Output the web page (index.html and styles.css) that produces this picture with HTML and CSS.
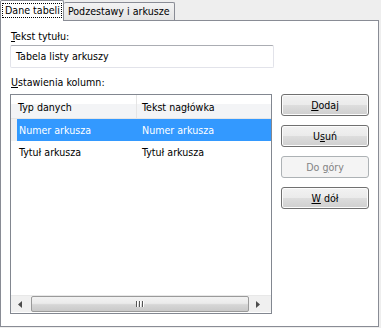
FILE: index.html
```html
<!DOCTYPE html>
<html lang="pl">
<head>
<meta charset="utf-8">
<title>Dane tabeli</title>
<link rel="stylesheet" href="styles.css">
</head>
<body>
<div class="dialog">
  <div class="tabs">
    <div class="tab active"><span class="focus">Dane tabeli</span></div>
    <div class="tab">Podzestawy i arkusze</div>
  </div>
  <div class="panel">
    <div class="label"><u>T</u>ekst tytułu:</div>
    <div class="input">Tabela listy arkuszy</div>
    <div class="label second"><u>U</u>stawienia kolumn:</div>
    <div class="main">
      <div class="list">
        <div class="header">
          <div class="col c1">Typ danych</div>
          <div class="col c2">Tekst nagłówka</div>
        </div>
        <div class="rows">
          <div class="row selected">
            <div class="cell c1">Numer arkusza</div>
            <div class="cell c2">Numer arkusza</div>
          </div>
          <div class="row">
            <div class="cell c1">Tytuł arkusza</div>
            <div class="cell c2">Tytuł arkusza</div>
          </div>
        </div>
        <div class="hscroll">
          <div class="arrow left"><svg width="4" height="7" viewBox="0 0 4 7"><path d="M4 0 L0 3.5 L4 7 Z" fill="#4d4d4d"/></svg></div>
          <div class="thumb"><span class="grip"></span><span class="grip"></span><span class="grip"></span></div>
          <div class="track"></div>
          <div class="arrow right"><svg width="4" height="7" viewBox="0 0 4 7"><path d="M0 0 L4 3.5 L0 7 Z" fill="#4d4d4d"/></svg></div>
        </div>
      </div>
      <div class="buttons">
        <div class="btn"><u>D</u>odaj</div>
        <div class="btn">U<u>s</u>uń</div>
        <div class="btn disabled">Do <u>g</u>óry</div>
        <div class="btn"><u>W</u> dół</div>
      </div>
    </div>
  </div>
</div>
</body>
</html>
```
FILE: styles.css
```css
html, body {
  margin: 0;
  padding: 0;
  background: #eeeeee;
}
body {
  font-family: "DejaVu Sans Condensed", "Liberation Sans", sans-serif;
  font-size: 10.6px;
  color: #000;
  width: 381px;
  height: 328px;
  overflow: hidden;
}
u { text-decoration: underline; text-underline-offset: 1px; }
.tabs {
  display: flex;
  height: 20px;
  align-items: flex-end;
  position: relative;
  z-index: 2;
}
.tab {
  flex-shrink: 0;
  white-space: nowrap;
  height: 18px;
  box-sizing: border-box;
  border: 1px solid #898c95;
  border-bottom: none;
  background: linear-gradient(#f3f3f3, #e4e4e4);
  padding: 1px 4px 0 4px;
  line-height: 15px;
  border-radius: 2px 2px 0 0;
}
.tab:not(.active) {
  border-left: none;
}
.tab.active {
  height: 21px;
  margin-bottom: -1px;
  background: #fff;
  padding: 2px 1px 0 1px;
}
.focus {
  display: inline-block;
  border: 1px dotted #000;
  padding: 0 1px 0 2px;
  line-height: 13px;
}
.panel {
  width: 379px;
  height: 307px;
  box-sizing: border-box;
  border: 1px solid #898c95;
  background: #fff;
  padding: 8px 9px 0 9px;
}
.label {
  height: 14px;
  line-height: 14px;
  padding-left: 1px;
  margin-bottom: 2px;
}
.label.second {
  margin-top: 7px;
  margin-bottom: 5px;
}
.input {
  width: 264px;
  height: 23px;
  box-sizing: border-box;
  border: 1px solid #e2e3ea;
  border-top-color: #abadb3;
  border-radius: 2px;
  padding: 0 5px;
  line-height: 21px;
}
.main {
  display: flex;
  gap: 9px;
}
.list {
  width: 264px;
  height: 220px;
  box-sizing: border-box;
  border: 1px solid #828790;
  display: flex;
  flex-direction: column;
}
.header {
  display: flex;
  height: 24px;
  background: linear-gradient(#ffffff 0%, #ffffff 40%, #f3f4f6 41%, #f3f4f6 100%);
  border-bottom: 1px solid #e5e5e5;
  box-sizing: border-box;
}
.col {
  line-height: 24px;
  box-sizing: border-box;
}
.col.c1 {
  width: 126px;
  padding-left: 7px;
  border-right: 1px solid #e5e5e5;
}
.col.c2 {
  padding-left: 5px;
}
.rows {
  flex: 1;
}
.row {
  display: flex;
  height: 22px;
  line-height: 22px;
  margin-left: 6px;
}
.row.selected {
  background: #3399ff;
  color: #fff;
  box-shadow: -6px 0 0 #f0f0f0;
}
.cell.c1 {
  width: 120px;
  padding-left: 2px;
  box-sizing: border-box;
}
.cell.c2 {
  padding-left: 5px;
}
.hscroll {
  display: flex;
  height: 17px;
  background: #f0f0f0;
  border-top: 1px solid #e8e8e8;
  box-sizing: border-box;
  margin-bottom: 1px;
}
.arrow {
  width: 20px;
  display: flex;
  align-items: center;
  box-sizing: border-box;
}
.arrow.left { padding-left: 7px; }
.arrow.right { padding-left: 5px; }
.thumb {
  width: 218px;
  box-sizing: border-box;
  border: 1px solid #9a9a9a;
  border-radius: 2px;
  background: linear-gradient(#f2f2f2 0%, #ebebeb 45%, #d6d6d6 55%, #c9c9c9 100%);
  display: flex;
  justify-content: center;
  align-items: center;
  gap: 1px;
}
.grip {
  width: 1px;
  height: 6px;
  background: #555;
  box-shadow: 1px 0 0 #fff;
  margin-right: 1px;
}
.track {
  width: 2px;
}
.buttons {
  display: flex;
  flex-direction: column;
  gap: 9px;
}
.btn {
  width: 88px;
  height: 22px;
  box-sizing: border-box;
  border: 1px solid #707070;
  border-radius: 3px;
  background: linear-gradient(#f2f2f2 0%, #ebebeb 48%, #dddddd 52%, #cfcfcf 100%);
  box-shadow: inset 0 0 0 1px #fcfcfc;
  text-align: center;
  line-height: 20px;
}
.btn.disabled {
  border-color: #adb2b5;
  background: #f4f4f4;
  color: #838383;
  box-shadow: none;
}
```
